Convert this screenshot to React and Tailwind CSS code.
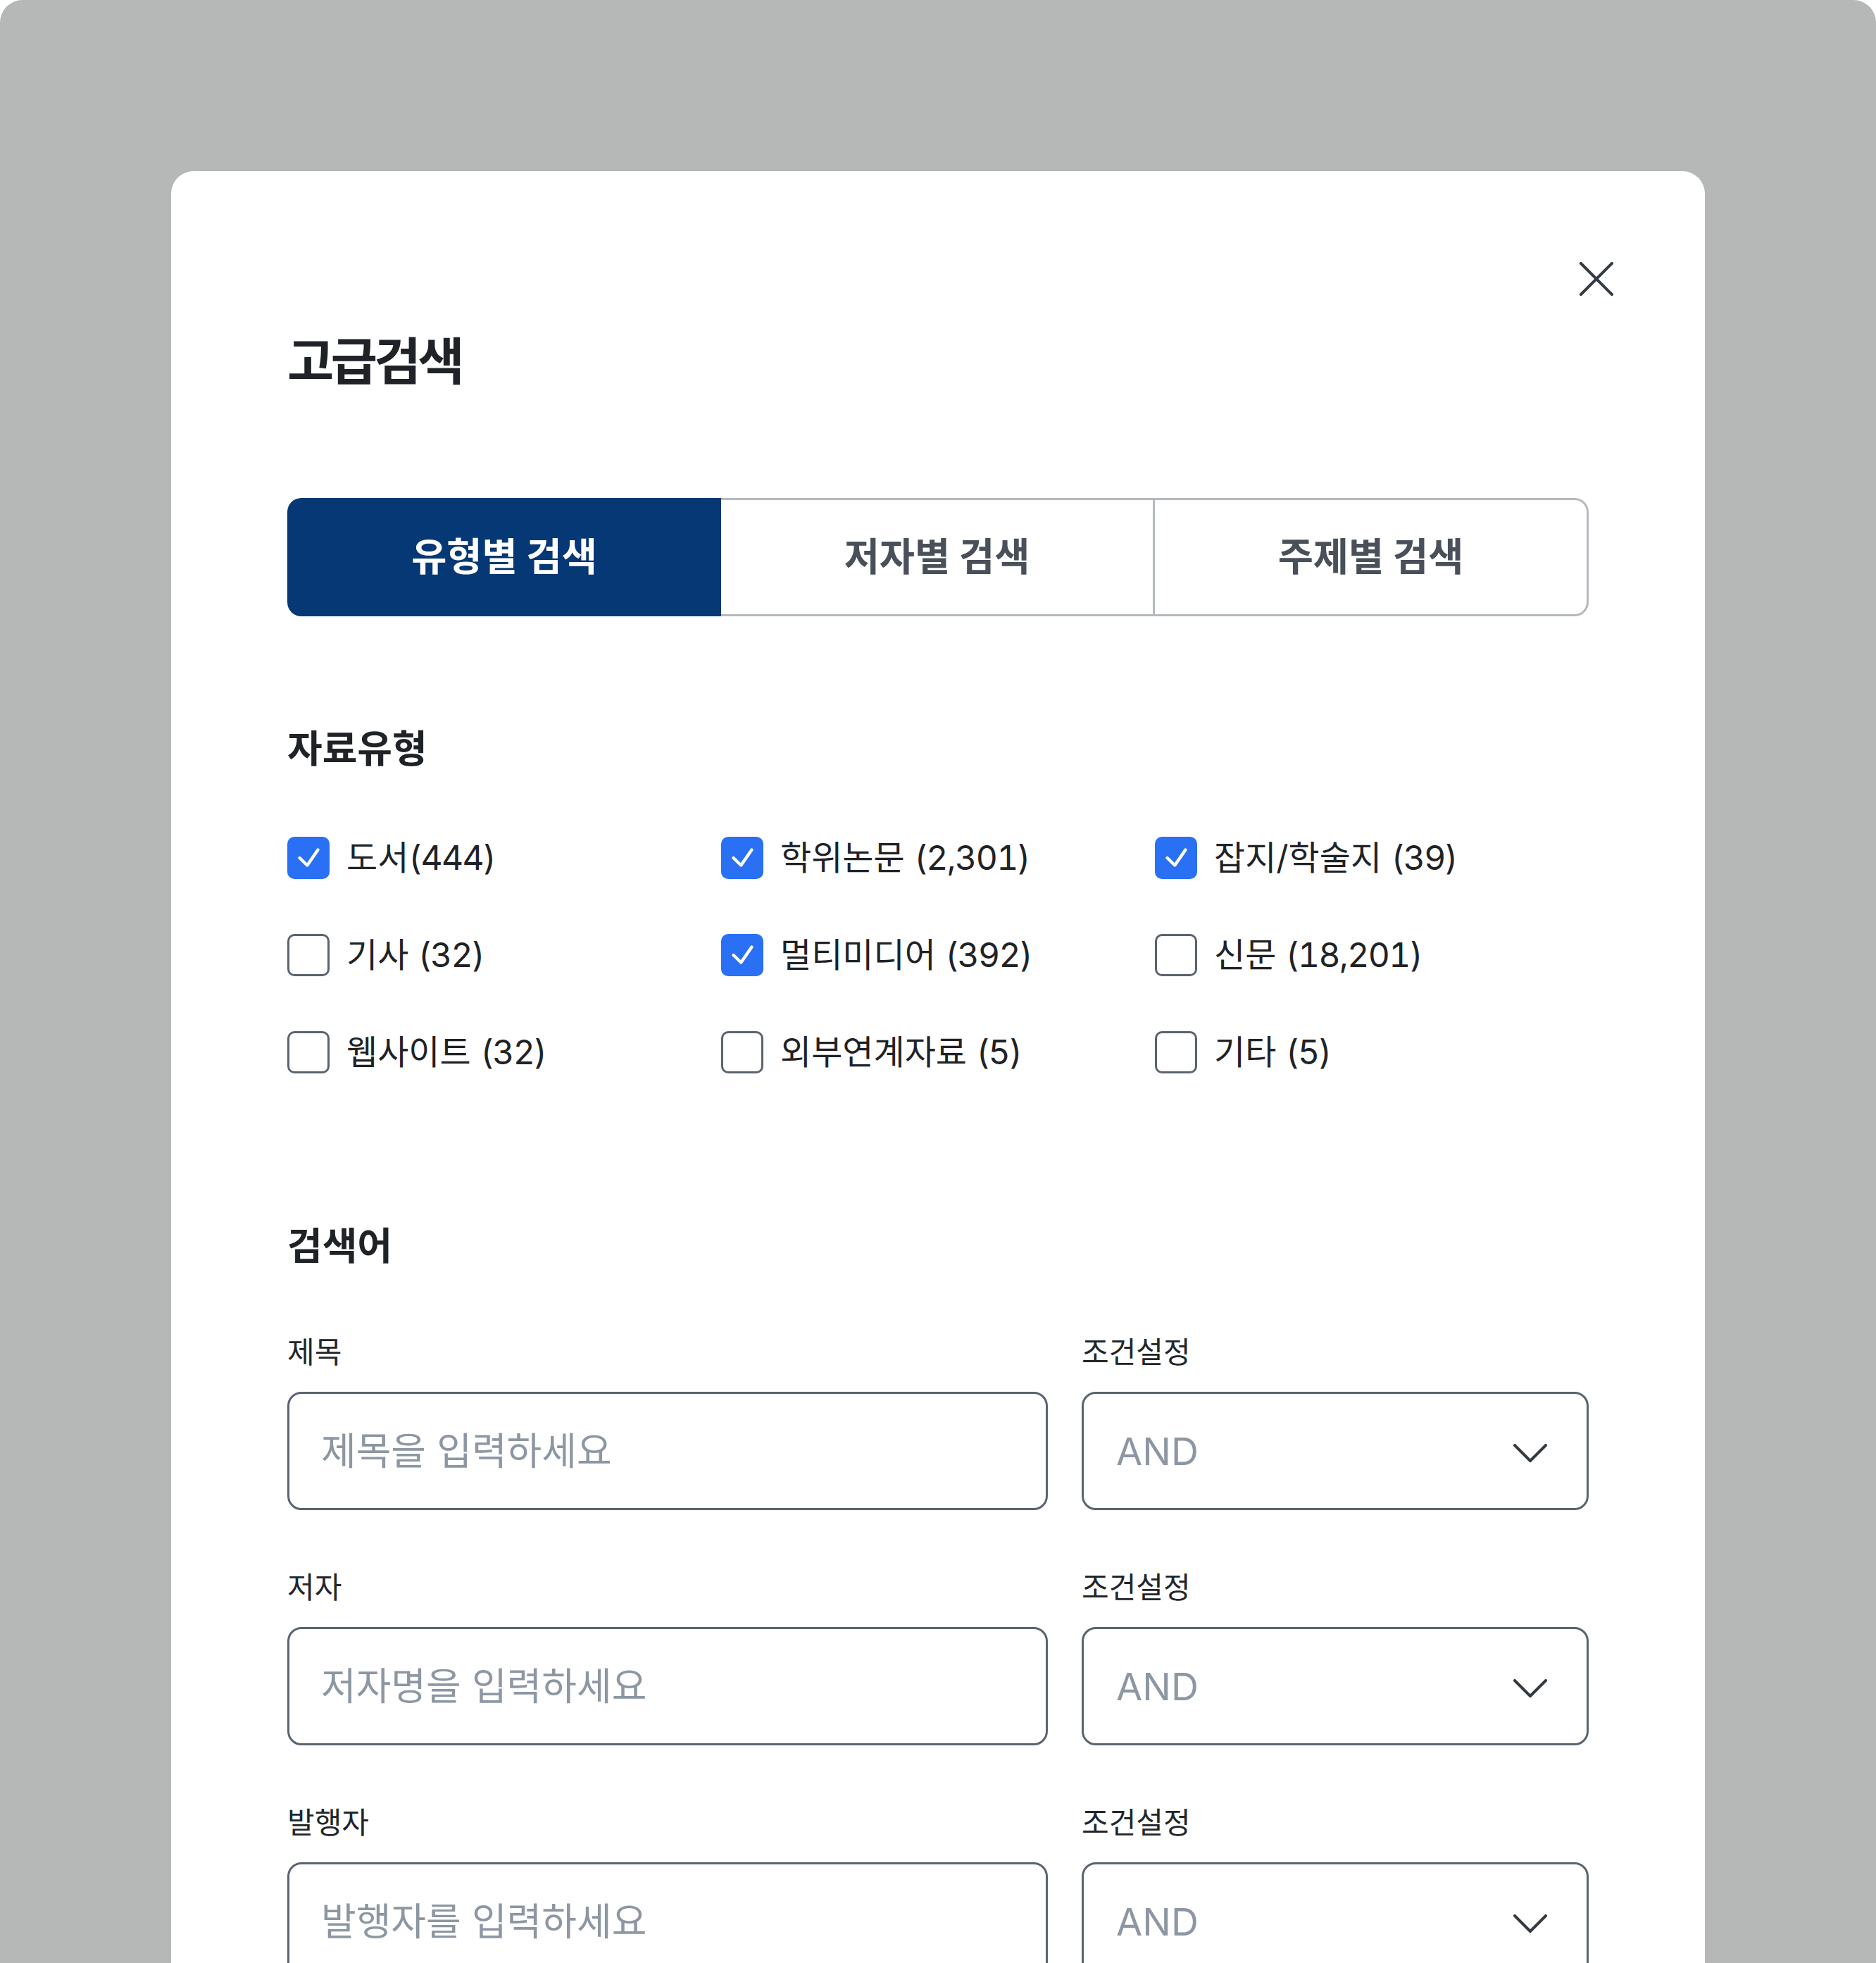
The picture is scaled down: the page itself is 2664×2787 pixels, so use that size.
import React from 'react';
import { X, ChevronDown } from 'lucide-react';

const types = [
  ['도서', '(444)', true],
  ['학위논문 ', '(2,301)', true],
  ['잡지/학술지 ', '(39)', true],
  ['기사 ', '(32)', false],
  ['멀티미디어 ', '(392)', true],
  ['신문 ', '(18,201)', false],
  ['웹사이트 ', '(32)', false],
  ['외부연계자료 ', '(5)', false],
  ['기타 ', '(5)', false],
];

const fields = [
  ['제목', '제목을 입력하세요'],
  ['저자', '저자명을 입력하세요'],
  ['발행자', '발행자를 입력하세요'],
];

const CheckItem = ({ name, count, checked }) => (
  <label className="flex items-center gap-[24px] h-[60px]">
    {checked ? (
      <span className="w-[60px] h-[60px] rounded-[10px] bg-[#2970f5] flex items-center justify-center">
        <svg width="60" height="60" viewBox="0 0 60 60" fill="none">
          <path d="M17.5 30L28.3 40.5L43.5 18.5" stroke="white" strokeWidth="4.4" strokeLinecap="round" strokeLinejoin="round" />
        </svg>
      </span>
    ) : (
      <span className="w-[60px] h-[60px] rounded-[10px] border-[3px] border-[#5a6470] bg-white" />
    )}
    <span className="text-[48px] leading-[60px] text-[#1f2327] whitespace-pre">
      {name}
      <span className="tabular-nums tracking-[-1.6px]">{count}</span>
    </span>
  </label>
);

const SearchRow = ({ label, placeholder }) => (
  <div className="grid grid-cols-[1080px_720px] gap-x-[48px]">
    <div>
      <div className="text-[42px] leading-[60px] text-[#22262b] mb-[26px]">{label}</div>
      <div className="h-[168px] rounded-[20px] border-[3px] border-[#5a6470] bg-white flex items-center px-[45px]">
        <span className="text-[54px] text-[#8d97a3]">{placeholder}</span>
      </div>
    </div>
    <div>
      <div className="text-[42px] leading-[60px] text-[#22262b] mb-[26px]">조건설정</div>
      <div className="h-[168px] rounded-[20px] border-[3px] border-[#5a6470] bg-white flex items-center justify-between pl-[46px] pr-[36px]">
        <span className="text-[54px] text-[#8d97a3]">AND</span>
        <ChevronDown size={88} strokeWidth={1.1} className="text-[#343a42] mt-[6px]" />
      </div>
    </div>
  </div>
);

export default function App() {
  return (
    <div
      className="w-[2664px] h-[2787px] overflow-hidden bg-[#b6b8b7] rounded-t-[32px] pt-[243px] px-[243px]"
      style={{ fontFamily: '"Inter", "Noto Sans CJK KR", sans-serif' }}
    >
      <div className="relative w-[2178px] h-[2544px] bg-white rounded-t-[32px] pt-[230px] px-[165px]">
        <X size={88} strokeWidth={1.1} className="absolute top-[109px] right-[110px] text-[#343a42]" />
        <h1 className="text-[72px] leading-[80px] font-bold text-[#1f2327] tracking-[-4.5px]">고급검색</h1>

        <div className="mt-[154px] h-[168px] grid grid-cols-3">
          <div className="rounded-l-[20px] bg-[#053874] text-white text-[54.5px] font-bold flex items-center justify-center">유형별 검색</div>
          <div className="border-y-[3px] border-r-[3px] border-[#b5babf] text-[#49505a] text-[54.5px] font-bold flex items-center justify-center">저자별 검색</div>
          <div className="rounded-r-[20px] border-y-[3px] border-r-[3px] border-[#b5babf] text-[#49505a] text-[54.5px] font-bold flex items-center justify-center">주제별 검색</div>
        </div>

        <h2 className="mt-[157px] text-[54px] leading-[64px] font-bold text-[#1f2327]">자료유형</h2>
        <div className="mt-[92px] grid grid-cols-3 gap-y-[78px]">
          {types.map(([name, count, checked]) => (
            <CheckItem key={name} name={name} count={count} checked={checked} />
          ))}
        </div>

        <h2 className="mt-[214px] text-[54px] leading-[64px] font-bold text-[#1f2327]">검색어</h2>
        <div className="mt-[88px] flex flex-col gap-[80px]">
          {fields.map(([label, placeholder]) => (
            <SearchRow key={label} label={label} placeholder={placeholder} />
          ))}
        </div>
      </div>
    </div>
  );
}
